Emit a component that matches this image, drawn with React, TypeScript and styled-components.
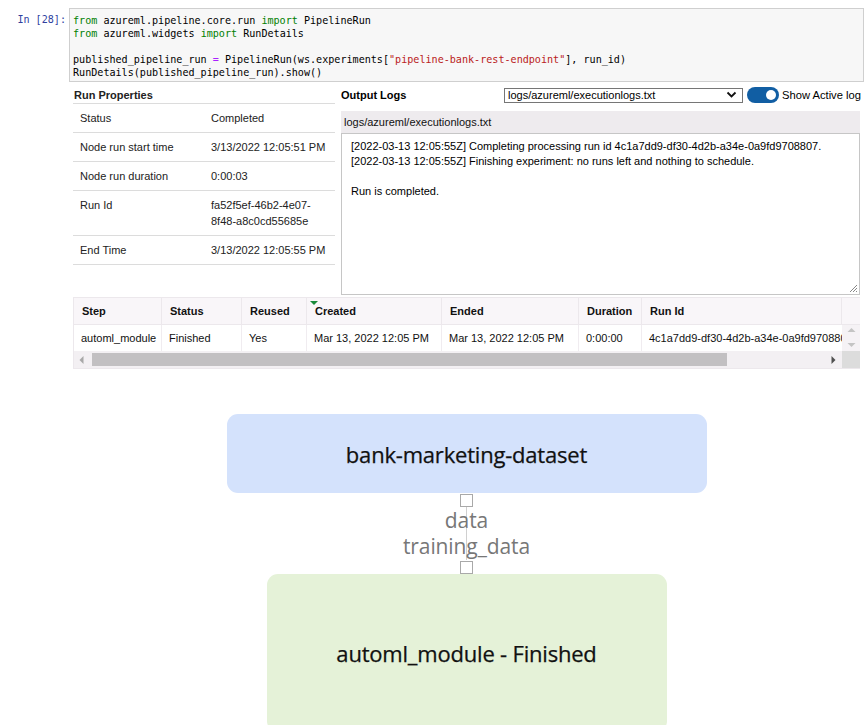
import React from 'react';
import styled, {createGlobalStyle} from "styled-components";

const GlobalStyle = createGlobalStyle`
	body {
		margin: 0;
		background: #fff;
		font-family: "Liberation Sans", Arial, sans-serif;
		font-size: 11px;
		color: #222;
	}
`

const runProps = [
	{label: "Status", value: "Completed"},
	{label: "Node run start time", value: "3/13/2022 12:05:51 PM"},
	{label: "Node run duration", value: "0:00:03"},
	{label: "Run Id", value: "fa52f5ef-46b2-4e07-8f48-a8c0cd55685e"},
	{label: "End Time", value: "3/13/2022 12:05:55 PM"},
]

const steps = [
	{
		step: "automl_module", status: "Finished", reused: "Yes",
		created: "Mar 13, 2022 12:05 PM", ended: "Mar 13, 2022 12:05 PM",
		duration: "0:00:00", runId: "4c1a7dd9-df30-4d2b-a34e-0a9fd9708807"
	},
]

const headers = ["Step", "Status", "Reused", "Created", "Ended", "Duration", "Run Id"]

function App() {
	return (
		<Page>
			<GlobalStyle/>
			<Cell>
				<Prompt>In [28]:</Prompt>
				<CodeBox>
					<Line><Kw>from</Kw> azureml.pipeline.core.run <Kw>import</Kw> PipelineRun</Line>
					<Line><Kw>from</Kw> azureml.widgets <Kw>import</Kw> RunDetails</Line>
					<Line>{" "}</Line>
					<Line>published_pipeline_run <Op>=</Op> PipelineRun(ws.experiments[<Str>"pipeline-bank-rest-endpoint"</Str>], run_id)</Line>
					<Line>RunDetails(published_pipeline_run).show()</Line>
				</CodeBox>
			</Cell>

			<Output>
				<TopRow>
					<PropsPanel>
						<PanelTitle>Run Properties</PanelTitle>
						{runProps.map(p => (
							<PropRow key={p.label}>
								<span>{p.label}</span>
								<PropValue>{p.value}</PropValue>
							</PropRow>
						))}
					</PropsPanel>

					<LogsPanel>
						<LogsBar>
							<PanelTitle as="div" $plain>Output Logs</PanelTitle>
							<SelectBox>
								<span>logs/azureml/executionlogs.txt</span>
								<svg width="11" height="8" viewBox="0 0 11 8">
									<path d="M1.5 1.5 L5.5 5.5 L9.5 1.5" fill="none" stroke="#111" strokeWidth="1.8"/>
								</svg>
							</SelectBox>
							<Toggle><Knob/></Toggle>
							<ToggleLabel>Show Active log</ToggleLabel>
						</LogsBar>
						<LogHeader>logs/azureml/executionlogs.txt</LogHeader>
						<LogText>
							<div>[2022-03-13 12:05:55Z] Completing processing run id 4c1a7dd9-df30-4d2b-a34e-0a9fd9708807.</div>
							<div>[2022-03-13 12:05:55Z] Finishing experiment: no runs left and nothing to schedule.</div>
							<div>&nbsp;</div>
							<div>Run is completed.</div>
							<Grip width="9" height="9" viewBox="0 0 9 9">
								<path d="M8 1 L1 8 M8 4 L4 8 M8 7 L7 8" stroke="#888" strokeWidth="1"/>
							</Grip>
						</LogText>
					</LogsPanel>
				</TopRow>

				<StepTable>
					{headers.map(h => (
						<HeadCell key={h}>
							{h === "Created" && <SortMark/>}
							{h}
						</HeadCell>
					))}
					<HeadCell/>
					{steps.map(s => (
						<React.Fragment key={s.runId}>
							<DataCell>{s.step}</DataCell>
							<DataCell>{s.status}</DataCell>
							<DataCell>{s.reused}</DataCell>
							<DataCell>{s.created}</DataCell>
							<DataCell>{s.ended}</DataCell>
							<DataCell>{s.duration}</DataCell>
							<DataCell>{s.runId}</DataCell>
							<VScroll>
								<svg width="9" height="22" viewBox="0 0 9 22">
									<path d="M0.5 5 L4.5 1 L8.5 5 Z" fill="#c4c4c4"/>
									<path d="M0.5 16 L4.5 20 L8.5 16 Z" fill="#c4c4c4"/>
								</svg>
							</VScroll>
						</React.Fragment>
					))}
					<HScroll>
						<svg width="5" height="8" viewBox="0 0 5 8"><path d="M4.5 0 L0.5 4 L4.5 8 Z" fill="#a8a8a8"/></svg>
						<Thumb/>
						<svg width="5" height="8" viewBox="0 0 5 8"><path d="M0.5 0 L4.5 4 L0.5 8 Z" fill="#505050"/></svg>
					</HScroll>
					<Corner/>
				</StepTable>

				<Graph>
					<Node $bg="#d4e2fc" $w={480} $h={79}>bank-marketing-dataset</Node>
					<Port/>
					<Connector>
						<EdgeLabel>data</EdgeLabel>
						<EdgeLabel>training_data</EdgeLabel>
					</Connector>
					<Port/>
					<Node $bg="#e5f2d8" $w={400} $h={158}>automl_module - Finished</Node>
				</Graph>
			</Output>
		</Page>
	);
}


export default App;

const Page = styled.div`
	padding-top: 8px;
	width: 867px;
	overflow: hidden;
`

const Cell = styled.div`
	display: flex;
	margin-right: 3px;
`

const Prompt = styled.div`
	width: 69px;
	padding: 5px 3px 0 0;
	box-sizing: border-box;
	text-align: right;
	font-family: "DejaVu Sans Mono", "Liberation Mono", monospace;
	font-size: 10.1px;
	line-height: 13px;
	color: #303f9f;
`

const CodeBox = styled.div`
	flex: 1;
	height: 74px;
	box-sizing: border-box;
	padding: 5px 3px;
	background: #f7f7f7;
	border: 1px solid #cfcfcf;
	font-family: "DejaVu Sans Mono", "Liberation Mono", monospace;
	font-size: 10.1px;
	line-height: 13px;
	color: #000;
`

const Line = styled.div`
	white-space: pre;
	height: 13px;
`

const Kw = styled.span`
	color: #008000;
`

const Op = styled.span`
	color: #aa22ff;
`

const Str = styled.span`
	color: #ba2121;
`

const Output = styled.div`
	margin: 5px 0 0 73px;
	width: 787px;
`

const TopRow = styled.div`
	display: flex;
	align-items: flex-start;
	gap: 5px;
`

const PropsPanel = styled.div`
	width: 262px;
`

const PanelTitle = styled.div<{ $plain?: boolean }>`
	font-weight: bold;
	line-height: 16px;
	height: 16px;
	padding-left: 1px;
	border-bottom: ${p => p.$plain ? "none" : "1px solid #dcdcdc"};
`

const PropRow = styled.div`
	display: grid;
	grid-template-columns: 131px 1fr;
	padding: 6px 0 6px 7px;
	line-height: 16px;
	border-bottom: 1px solid #dcdcdc;
	color: #222;
`

const PropValue = styled.span`
	padding-right: 4px;
	white-space: normal;
`

const LogsPanel = styled.div`
	width: 520px;
	display: flex;
	flex-direction: column;
`

const LogsBar = styled.div`
	display: flex;
	align-items: center;
	height: 16px;
	color: #000;

	& > div:first-child {
		width: 163px;
		flex-shrink: 0;
	}
`

const SelectBox = styled.div`
	width: 239px;
	flex-shrink: 0;
	height: 15px;
	box-sizing: border-box;
	display: flex;
	align-items: center;
	justify-content: space-between;
	padding: 0 5px 0 3px;
	border: 1px solid #767676;
	color: #000;
`

const Toggle = styled.div`
	width: 32px;
	height: 16px;
	flex-shrink: 0;
	margin: 0 3px 0 4px;
	border-radius: 8px;
	background: #115ea3;
	display: flex;
	align-items: center;
	justify-content: flex-end;
	padding-right: 3px;
	box-sizing: border-box;
`

const Knob = styled.div`
	width: 10px;
	height: 10px;
	border-radius: 50%;
	background: #fff;
`

const ToggleLabel = styled.span`
	white-space: nowrap;
	font-size: 11.2px;
`

const LogHeader = styled.div`
	margin-top: 8px;
	margin-left: 1px;
	height: 22px;
	line-height: 22px;
	padding-left: 3px;
	background: #eeebee;
	color: #111;
`

const LogText = styled.div`
	position: relative;
	margin-left: 1px;
	height: 162px;
	box-sizing: border-box;
	padding: 5px 9px;
	border: 1px solid #c6c6c6;
	line-height: 15px;
	color: #000;
`

const Grip = styled.svg`
	position: absolute;
	right: 1px;
	bottom: 1px;
`

const StepTable = styled.div`
	margin-top: 2px;
	display: grid;
	grid-template-columns: 89px 80px 65px 135px 137px 63px 200px 18px;
	grid-template-rows: 28px 26px 17px;
	border-bottom: 1px solid #ece8ec;
`

const HeadCell = styled.div`
	position: relative;
	display: flex;
	align-items: center;
	padding-left: 8px;
	background: #f9f6f9;
	border-right: 1px solid #ece8ec;
	border-top: 1px solid #ece8ec;
	border-bottom: 1px solid #ece8ec;
	font-weight: bold;
	color: #111;
	white-space: nowrap;

	&:first-child {
		border-left: 1px solid #ece8ec;
	}
	&:nth-child(8) {
		border-right: none;
	}
`

const SortMark = styled.span`
	position: absolute;
	left: 3px;
	top: 3px;
	width: 0;
	height: 0;
	border-left: 4px solid transparent;
	border-right: 4px solid transparent;
	border-top: 4px solid #1a8a3a;
`

const DataCell = styled.div`
	display: flex;
	align-items: center;
	padding-left: 7px;
	background: #fff;
	border-right: 1px solid #f0ecf0;
	color: #111;
	white-space: nowrap;
	overflow: hidden;

	&:nth-child(9) {
		border-left: 1px solid #ece8ec;
	}
	&:nth-child(15) {
		border-right: none;
	}
`

const VScroll = styled.div`
	background: #f5f2f5;
	display: flex;
	align-items: center;
	justify-content: center;
`

const HScroll = styled.div`
	grid-column: 1 / 8;
	display: flex;
	align-items: center;
	padding: 0 6px 0 5px;
	background: #f3f0f3;
	border-left: 1px solid #ece8ec;

	& > svg:last-child {
		margin-left: auto;
	}
`

const Thumb = styled.div`
	width: 635px;
	height: 13px;
	margin-left: 8px;
	background: #c2c0c2;
`

const Corner = styled.div`
	background: #dcdcdc;
`

const Graph = styled.div`
	margin-top: 45px;
	display: flex;
	flex-direction: column;
	align-items: center;
	font-family: "Open Sans", "Noto Sans", sans-serif;
`

const Node = styled.div<{ $bg: string; $w: number; $h: number }>`
	width: ${p => p.$w}px;
	height: ${p => p.$h}px;
	flex-shrink: 0;
	border-radius: 11px;
	background: ${p => p.$bg};
	display: flex;
	align-items: center;
	justify-content: center;
	font-size: 22px;
	color: #111;
	letter-spacing: -0.2px;
	-webkit-text-stroke: 0.25px #111;
`

const Port = styled.div`
	width: 13px;
	height: 13px;
	box-sizing: border-box;
	margin-top: 1px;
	border: 1.5px solid #a9a9a9;
	background: #fff;
`

const Connector = styled.div`
	position: relative;
	height: 53px;
	display: flex;
	flex-direction: column;
	align-items: center;

	&::before {
		content: "";
		position: absolute;
		left: 50%;
		top: 0;
		bottom: 0;
		width: 1px;
		background: #d0d0d0;
	}
`

const EdgeLabel = styled.div`
	position: relative;
	height: 26px;
	line-height: 26px;
	font-size: 21px;
	color: #777;
	letter-spacing: -0.1px;
`
